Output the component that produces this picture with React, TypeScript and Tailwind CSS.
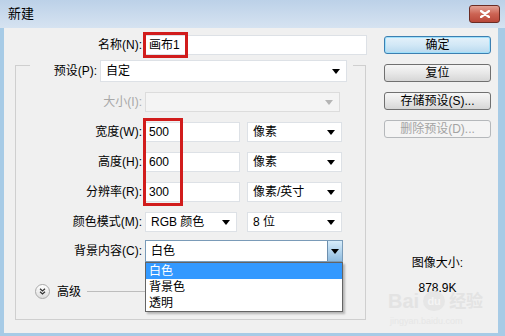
import React from 'react';

const Arrow = ({ disabled = false }: { disabled?: boolean }) => (
  <svg width="8" height="5" viewBox="0 0 8 5" className="shrink-0">
    <path d="M0 0 L8 0 L4 5 Z" fill={disabled ? '#b5b5b5' : '#000'} />
  </svg>
);

function Select({ value, className = '', disabled = false }: { value?: string; className?: string; disabled?: boolean }) {
  return (
    <div
      className={`flex items-center justify-between border pl-[5px] pr-[6px] ${
        disabled ? 'border-[#dcdcdc] bg-[#f4f4f4]' : 'border-[#dde1e6] bg-white'
      } ${className}`}
    >
      <span className="text-[12px] leading-none">{value}</span>
      <Arrow disabled={disabled} />
    </div>
  );
}

function Field({ value }: { value: string }) {
  return (
    <div className="flex h-[20px] w-[95px] items-center border border-[#dde1e6] bg-white pl-[3px] text-[12px]">
      {value}
    </div>
  );
}

function Label({ text, w = 'w-[126px]', disabled = false }: { text: string; w?: string; disabled?: boolean }) {
  return (
    <div className={`${w} shrink-0 text-right text-[12px] ${disabled ? 'text-[#a8a8a8]' : 'text-black'}`}>{text}</div>
  );
}

function Btn({ text, primary = false, disabled = false }: { text: string; primary?: boolean; disabled?: boolean }) {
  let cls = 'border-[#707070] bg-linear-to-b from-[#f6f6f6] via-[#e8e8e8] to-[#d6d6d6] text-black';
  if (primary) cls = 'border-[#3c7fb1] bg-linear-to-b from-[#e4f1fa] via-[#d2e8f6] to-[#b8d9ef] text-black shadow-[inset_0_0_0_1px_#9fe0fb]';
  if (disabled) cls = 'border-[#b5b8bb] bg-[#f4f4f4] text-[#a3a3a3]';
  return (
    <div className={`flex h-[18px] w-[107px] items-center justify-center rounded-[3px] border text-[12px] ${cls}`}>
      {text}
    </div>
  );
}

export default function App() {
  return (
    <div className="relative flex h-[336px] w-[505px] flex-col overflow-hidden bg-[#a7cbe6] font-['Liberation_Sans','Noto_Sans_CJK_SC',sans-serif] text-black">
      {/* Title bar */}
      <div className="flex h-[28px] shrink-0 items-center justify-between bg-linear-to-b from-[#bcd1e8] to-[#d6e3f1] pl-[8px] pr-[5px]">
        <span className="text-[13px]">新建</span>
        <div className="flex h-[18px] w-[31px] items-center justify-center rounded-[3px] border border-[#6b2c24] bg-linear-to-b from-[#e2a195] via-[#cc6353] to-[#b9483a]">
          <svg width="10" height="8" viewBox="0 0 10 8">
            <path d="M1 1 L9 7 M9 1 L1 7" stroke="#fff" strokeWidth="2.2" strokeLinecap="round" />
          </svg>
        </div>
      </div>

      {/* Client area */}
      <div className="mb-[3px] ml-[4px] mr-[7px] flex flex-1 bg-[#f0f0f0]">
        {/* Left column */}
        <div className="w-[376px] shrink-0">
          <div className="mt-[7px] flex h-[20px] items-center">
            <Label text="名称(N):" w="w-[138px]" />
            <div className="ml-[3px] flex h-[20px] w-[222px] items-center border border-[#dde1e6] bg-white pl-[3px] text-[12px]">
              画布1
            </div>
          </div>

          {/* Group box */}
          <div className="ml-[11px] mt-[10px] h-[255px] w-[351px] border border-[#cfcfcf]">
            <div className="-mt-[6px] ml-[14px] flex h-[22px] w-[323px] items-center bg-[#f0f0f0]">
              <Label text="预设(P):" w="w-[67px]" />
              <Select value="自定" className="ml-[3px] h-[22px] w-[247px]" />
            </div>

            <div className="mt-[10px] flex h-[20px] items-center">
              <Label text="大小(I):" disabled />
              <Select className="ml-[3px] h-[20px] w-[195px]" disabled />
            </div>

            {[
              ['宽度(W):', '500', '像素'],
              ['高度(H):', '600', '像素'],
              ['分辨率(R):', '300', '像素/英寸'],
            ].map(([l, v, u]) => (
              <div key={l} className="mt-[10px] flex h-[20px] items-center">
                <Label text={l} />
                <div className="ml-[3px]">
                  <Field value={v} />
                </div>
                <Select value={u} className="ml-[7px] h-[20px] w-[95px]" />
              </div>
            ))}

            <div className="mt-[10px] flex h-[20px] items-center">
              <Label text="颜色模式(M):" />
              <Select value="RGB 颜色" className="ml-[3px] h-[20px] w-[92px]" />
              <Select value="8 位" className="ml-[10px] h-[20px] w-[95px]" />
            </div>

            <div className="mt-[8px] flex h-[22px] items-center">
              <Label text="背景内容(C):" />
              <div className="relative ml-[3px] flex h-[22px] w-[198px] items-center border border-[#7a9bb8] bg-white pl-[5px]">
                <span className="flex-1 text-[12px]">白色</span>
                <div className="flex h-full w-[15px] items-center justify-center border-l border-[#6d8fae] bg-linear-to-b from-[#d7ecfa] to-[#8fbce0]">
                  <Arrow />
                </div>
                {/* Dropdown list */}
                <div className="absolute left-[-1px] top-[21px] z-10 w-[198px] border border-[#646464] bg-white text-[12px] shadow-[2px_2px_2px_rgba(0,0,0,0.25)]">
                  <div className="flex h-[16px] items-center bg-[#3399ff] pl-[3px] text-white">白色</div>
                  <div className="flex h-[16px] items-center pl-[3px]">背景色</div>
                  <div className="flex h-[16px] items-center pl-[3px]">透明</div>
                </div>
              </div>
            </div>

            <div className="mt-[21px] flex h-[17px] items-center">
              <div className="ml-[19px] flex h-[15px] w-[15px] items-center justify-center rounded-full border border-[#a9a9a9] bg-linear-to-b from-white to-[#dedede]">
                <svg width="7" height="7" viewBox="0 0 7 7">
                  <path d="M1 0.8 L3.5 3 L6 0.8 M1 3.8 L3.5 6 L6 3.8" stroke="#333" strokeWidth="1.2" fill="none" />
                </svg>
              </div>
              <span className="ml-[7px] text-[12px]">高级</span>
              <div className="ml-[6px] mr-[40px] h-px flex-1 bg-[#bdbdbd]" />
            </div>
          </div>
        </div>

        {/* Right column */}
        <div className="ml-[4px] flex w-[107px] flex-col items-center pt-[8px]">
          <Btn text="确定" primary />
          <div className="mt-[10px]">
            <Btn text="复位" />
          </div>
          <div className="mt-[10px]">
            <Btn text="存储预设(S)..." />
          </div>
          <div className="mt-[10px]">
            <Btn text="删除预设(D)..." disabled />
          </div>
          <div className="mt-[117px] text-center text-[12px] leading-[16px]">图像大小:</div>
          <div className="mt-[9px] text-center text-[12px] leading-[16px]">878.9K</div>
        </div>
      </div>

      {/* Watermark */}
      <div className="pointer-events-none absolute left-[388px] top-[291px] flex items-center gap-[4px] text-[#e3e3e3]">
        <span className="text-[20px] font-bold leading-none">Bai</span>
        <span className="flex h-[20px] w-[22px] items-center justify-center rounded-full bg-[#e6e6e6] text-[11px] font-bold leading-none text-[#f4f4f4]">du</span>
        <span className="text-[17px] font-bold leading-none">经验</span>
      </div>
      <div className="pointer-events-none absolute left-[390px] top-[315px] text-[9px] text-[#e6e6e6]">jingyan.baidu.com</div>

      {/* Red annotation boxes */}
      <div className="pointer-events-none absolute left-[143px] top-[32px] h-[26px] w-[45px] border-[3px] border-[#d11c1c]" />
      <div className="pointer-events-none absolute left-[143px] top-[118px] h-[88px] w-[40px] border-[3px] border-[#d11c1c]" />
    </div>
  );
}
